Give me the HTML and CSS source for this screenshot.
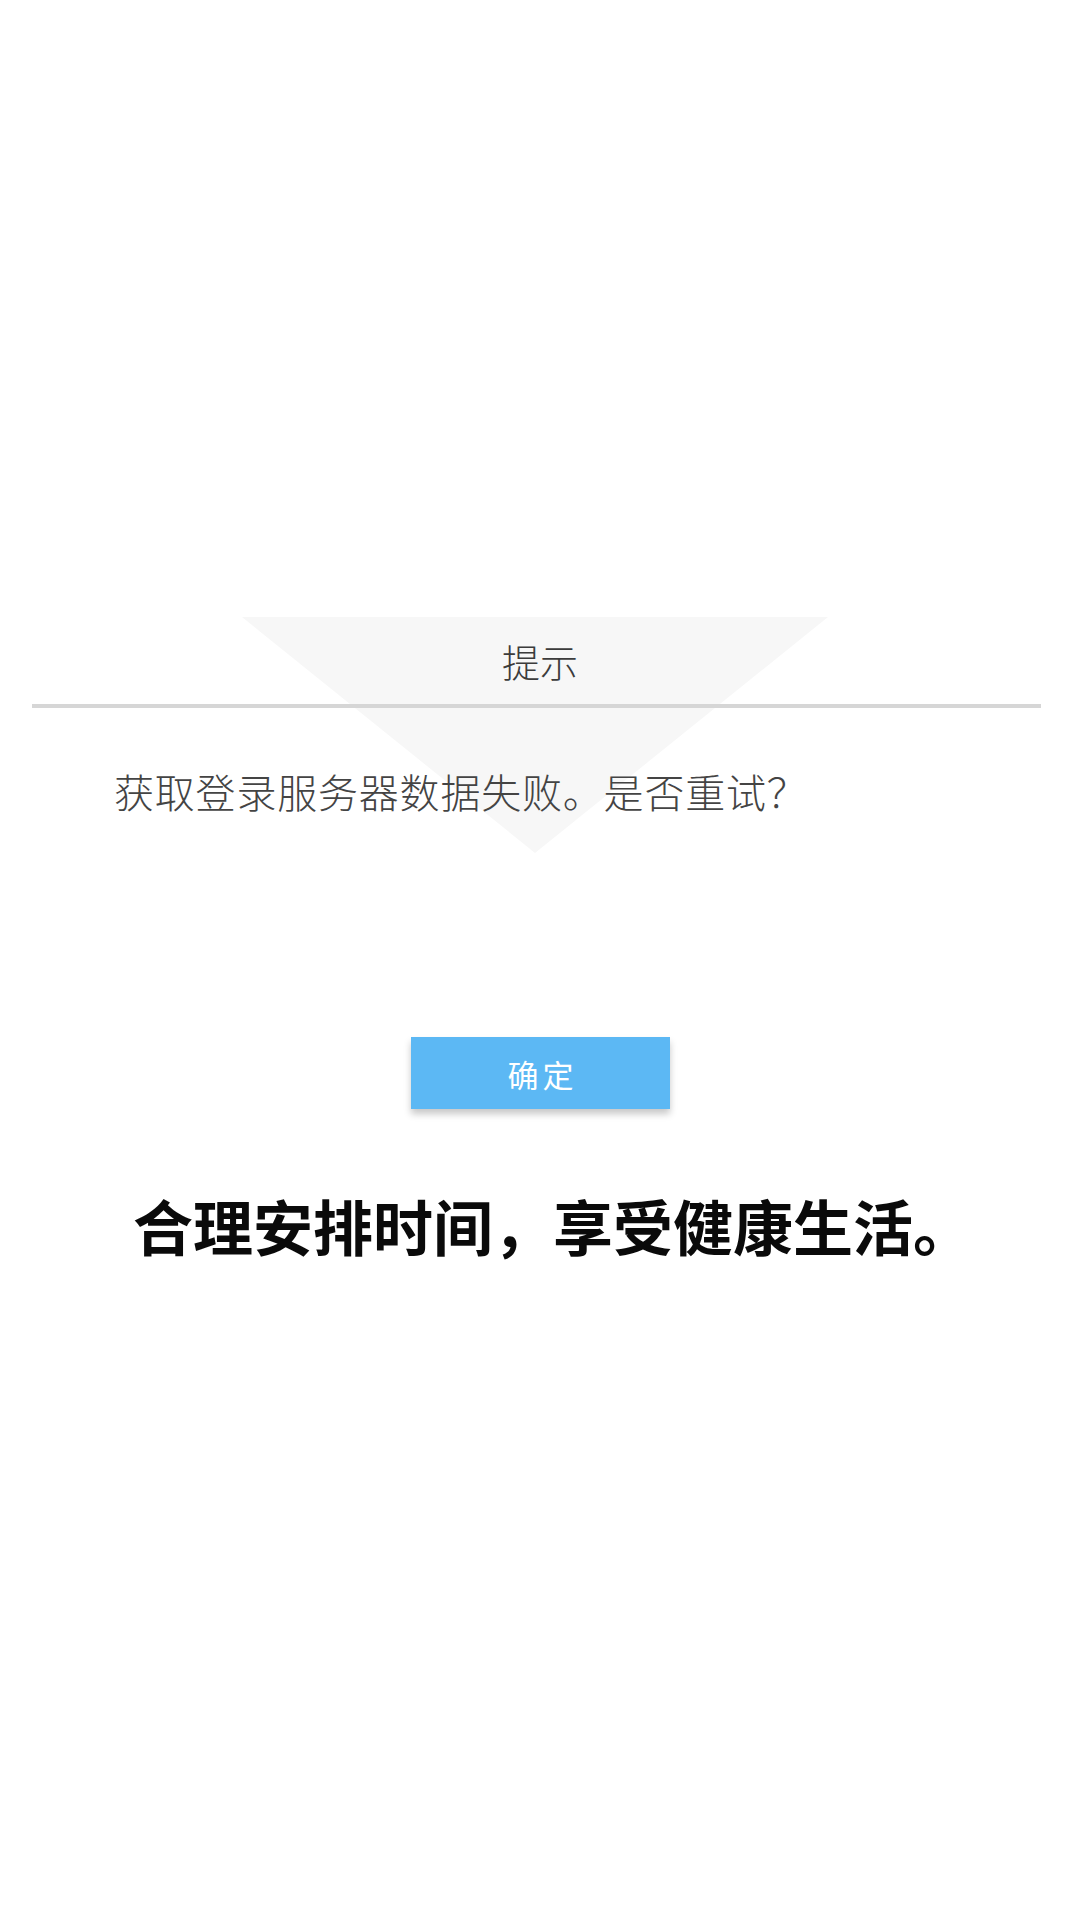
FILE: index.html
```html
<!DOCTYPE html>
<html lang="zh-CN">
<head>
    <meta charset="UTF-8">
    <meta name="viewport" content="width=device-width, initial-scale=1.0">
    <title>提示</title>
    <link rel="stylesheet" href="styles.css">
</head>
<body>
    <div class="page">
        <div class="dialog">
            <div class="dialog-title">提示</div>
            <div class="divider"></div>
            <div class="dialog-message">获取登录服务器数据失败。是否重试？</div>
            <button class="ok-btn" type="button">确定</button>
        </div>
        <p class="slogan">合理安排时间，享受健康生活。</p>
    </div>
</body>
</html>
```

FILE: styles.css
```css
body {
    margin: 0;
    background-color: #ffffff;
    font-family: "Noto Sans CJK SC", "Noto Sans", sans-serif;
}
.page {
    width: 1080px;
    height: 1920px;
    padding-top: 617px;
    box-sizing: border-box;
}
.dialog {
    position: relative;
}
/* faint triangle behind the dialog */
.dialog::before {
    content: "";
    position: absolute;
    top: 0;
    left: 242px;
    width: 586px;
    height: 236px;
    background-color: #f7f7f7;
    clip-path: polygon(0 0, 100% 0, 50% 100%);
    z-index: 0;
}
.dialog-title,
.divider,
.dialog-message,
.ok-btn {
    position: relative;
    z-index: 1;
}
.dialog-title {
    height: 87px;
    line-height: 87px;
    text-align: center;
    font-size: 38px;
    font-weight: 300;
    color: #3c3c3c;
}
.divider {
    height: 4px;
    margin: 0 39px 0 32px;
    background-color: #d6d6d6;
}
.dialog-message {
    margin-top: 58px;
    padding-left: 114px;
    font-size: 40px;
    font-weight: 300;
    line-height: 50px;
    letter-spacing: 0.8px;
    color: #444;
}
.ok-btn {
    display: block;
    width: 259px;
    height: 72px;
    margin: 221px 0 0 411px;
    border: none;
    background-color: #5cb8f4;
    color: white;
    font-family: "Noto Sans CJK SC", sans-serif;
    font-size: 31px;
    letter-spacing: 4px;
    padding: 0 0 0 4px;
    box-shadow: 0 5px 7px rgba(0,0,0,0.22);
}
.slogan {
    margin: 81px 0 0 133px;
    font-size: 60px;
    line-height: 70px;
    font-weight: bold;
    color: #0a0a0a;
    white-space: nowrap;
}
```
